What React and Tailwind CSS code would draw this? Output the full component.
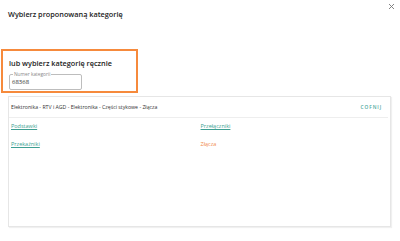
export default function App() {
  return (
    <div className="w-[400px] h-[241px] bg-white relative overflow-hidden font-['Open_Sans',sans-serif] text-[#222]">
      <div className="pl-[8px] pt-[8px] text-[7.3px] leading-[12px] font-semibold text-[#222]">
        Wybierz proponowaną kategorię
      </div>
      <button className="absolute top-[3px] right-[5px] w-[7px] h-[7px]">
        <svg viewBox="0 0 7 7" width="7" height="7">
          <path d="M1 1L6 6M6 1L1 6" stroke="#777" strokeWidth="0.9" />
        </svg>
      </button>
      <div className="mt-[29px] ml-[1px] w-[137px] h-[44px] border-2 border-[#f68a3c] pl-[6px] pt-[7px]">
        <div className="text-[7.3px] leading-[11px] font-semibold text-[#222]">lub wybierz kategorię ręcznie</div>
        <div className="relative mt-[5px] w-[73px] h-[16px] border border-[#bdbdbd] rounded-[2px] pl-[2px] pt-[3px]">
          <span className="absolute -top-[4px] left-[3px] bg-white px-[1px] text-[4.8px] leading-[6px] text-[#888]">Numer kategorii</span>
          <div className="text-[6px] leading-[8px] text-[#333]">68368</div>
        </div>
      </div>
      <div className="mt-[3px] ml-[8px] w-[383px] h-[131px] border border-[#e6e6e6] shadow-[1px_1px_1px_rgba(0,0,0,0.06)] bg-white">
        <div className="mr-[2px] h-[21px] border-b border-[#eeeeee] flex items-center justify-between pl-[2px] pr-[6px]">
          <span className="text-[5.2px] leading-[8px] text-[#333]">Elektronika - RTV i AGD - Elektronika - Części stykowe - Złącza</span>
          <span className="text-[4.8px] leading-[8px] tracking-[0.9px] text-[#4aa89c] font-semibold">COFNIJ</span>
        </div>
        <div className="grid grid-cols-2 pl-[2px] pt-[4px] gap-y-[10px]">
          <span className="text-[5.5px] leading-[8px] text-[#3e9f92] underline">Podstawki</span>
          <span className="text-[5.5px] leading-[8px] text-[#3e9f92] underline">Przełączniki</span>
          <span className="text-[5.5px] leading-[8px] text-[#3e9f92] underline">Przekaźniki</span>
          <span className="text-[5.5px] leading-[8px] text-[#f08a4b]">Złącza</span>
        </div>
      </div>
    </div>
  );
}
